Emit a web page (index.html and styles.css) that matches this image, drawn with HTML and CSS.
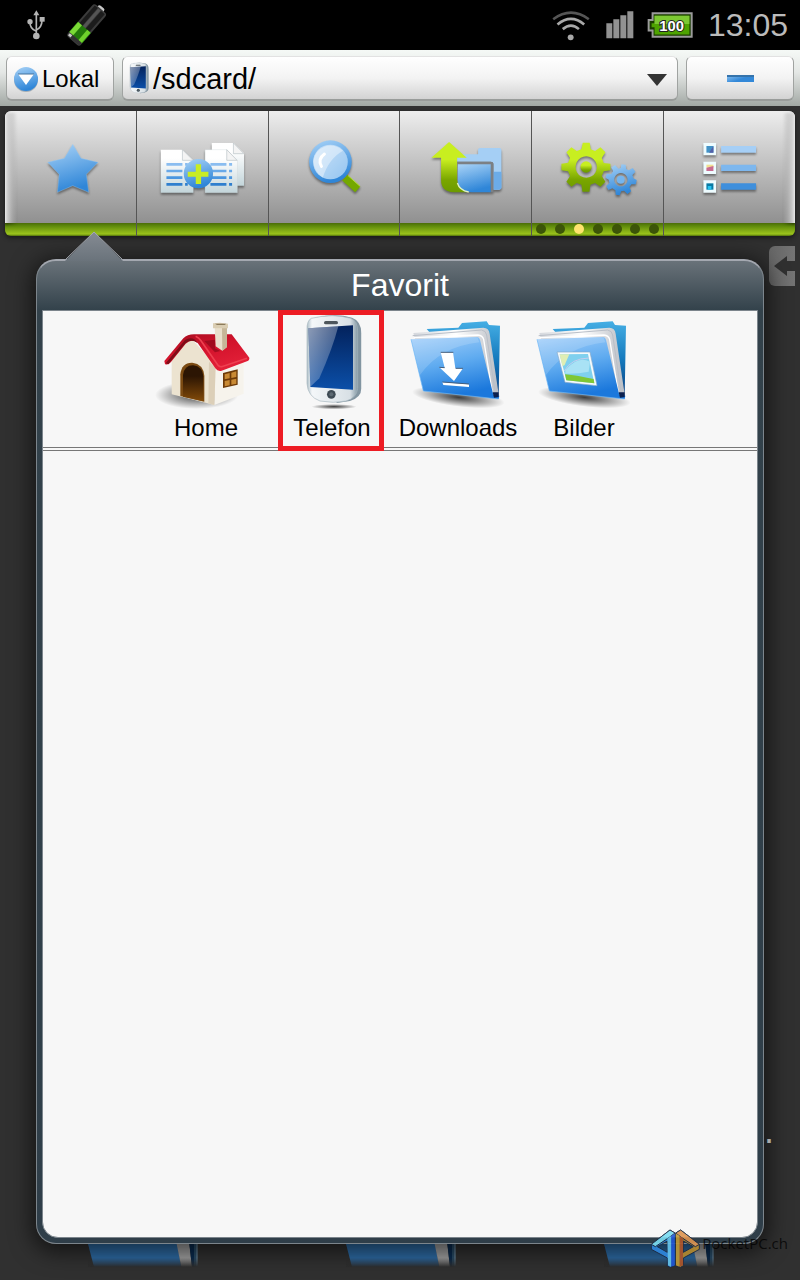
FILE: index.html
```html
<!DOCTYPE html>
<html lang="de">
<head>
    <meta charset="UTF-8">
    <meta name="viewport" content="width=device-width, initial-scale=1.0">
    <title>Favorit</title>
    <link rel="stylesheet" href="styles.css">
</head>
<body>
    <!-- shared gradients and folder shape -->
    <svg class="defs" width="0" height="0" aria-hidden="true">
        <defs>
            <linearGradient id="blue" x1="0" y1="0" x2="0.3" y2="1">
                <stop offset="0" stop-color="#a9d3f7"/>
                <stop offset="1" stop-color="#2f86d8"/>
            </linearGradient>
            <linearGradient id="green" x1="0" y1="0" x2="0" y2="1">
                <stop offset="0.35" stop-color="#c8ee20"/>
                <stop offset="0.75" stop-color="#7aa600"/>
                <stop offset="1" stop-color="#6c9a00"/>
            </linearGradient>
            <linearGradient id="paper" x1="0" y1="0" x2="0" y2="1">
                <stop offset="0.2" stop-color="#ffffff"/>
                <stop offset="1" stop-color="#c3d5da"/>
            </linearGradient>
            <linearGradient id="cover" x1="0" y1="0" x2="0.3" y2="1">
                <stop offset="0" stop-color="#a3cffa"/>
                <stop offset="0.5" stop-color="#5fabf0"/>
                <stop offset="1" stop-color="#1b78dc"/>
            </linearGradient>
            <linearGradient id="back" x1="0" y1="0" x2="0" y2="1">
                <stop offset="0" stop-color="#45aee4"/>
                <stop offset="0.5" stop-color="#1479bd"/>
                <stop offset="1" stop-color="#0b3c7c"/>
            </linearGradient>
            <linearGradient id="pages" x1="0" y1="0" x2="1" y2="0">
                <stop offset="0" stop-color="#d5d8dd"/>
                <stop offset="0.5" stop-color="#ffffff"/>
                <stop offset="1" stop-color="#b9bdc4"/>
            </linearGradient>
            <linearGradient id="screen" x1="0" y1="0" x2="0" y2="1">
                <stop offset="0" stop-color="#03225c"/>
                <stop offset="1" stop-color="#0b4fa8"/>
            </linearGradient>
            <linearGradient id="glare" x1="0" y1="0" x2="1" y2="1">
                <stop offset="0" stop-color="#ffffff" stop-opacity="0.55"/>
                <stop offset="1" stop-color="#ffffff" stop-opacity="0.05"/>
            </linearGradient>
            <linearGradient id="shell" x1="0" y1="0" x2="1" y2="0">
                <stop offset="0" stop-color="#aebfc8"/>
                <stop offset="0.1" stop-color="#f4f7f9"/>
                <stop offset="0.85" stop-color="#d8e0e5"/>
                <stop offset="1" stop-color="#8499a5"/>
            </linearGradient>
            <radialGradient id="shade">
                <stop offset="0" stop-color="#000000" stop-opacity="0.75"/>
                <stop offset="1" stop-color="#000000" stop-opacity="0"/>
            </radialGradient>
            <symbol id="folder" viewBox="15 18 378 300">
                <ellipse cx="205" cy="277" rx="140" ry="28" transform="rotate(7 205 277)" fill="url(#shade)"/>
                <path d="M110 72L205 68L216 54L290 49L297 60L330 62L326 272L310 278L220 200Z" fill="url(#back)"/>
                <path d="M70 84L280 68Q297 68 299 86L326 268L312 278L250 110L75 102Z" fill="url(#pages)"/>
                <path d="M68 92L275 75Q288 77 290 90L316 266" fill="none" stroke="#b9bfc8" stroke-width="3"/>
                <path d="M72 98L264 90Q278 92 281 103L308 270" fill="none" stroke="#ffffff" stroke-width="4"/>
                <path d="M63 103L262 96Q268 97 270 104L310 270L328 272L326 282L100 258Z" fill="url(#cover)"/>
                <path d="M63 103L262 96L268 112Q150 125 90 210Z" fill="#ffffff" opacity="0.16"/>
                <path d="M308 262L326 262L326 276L312 278Z" fill="#0b2150"/>
                <path d="M63 103L100 258L326 282" fill="none" stroke="#6db7f6" stroke-width="2"/>
            </symbol>
            <symbol id="phone" viewBox="465 25 170 285">
                <path d="M500 38Q555 24 606 38Q634 48 634 85V250Q634 278 600 288L560 294Z" fill="#8295a1"/>
                <path d="M484 40Q550 24 602 40Q623 47 623 78V250Q620 280 588 288Q550 296 510 288Q473 275 471 235V75Q470 47 484 40Z" fill="url(#shell)" stroke="#a8b6be" stroke-width="2"/>
                <path d="M475 70L609 61V254L481 246Z" fill="url(#screen)"/>
                <path d="M475 70L565 64Q548 130 508 220L481 245Z" fill="url(#glare)"/>
                <rect x="522" y="48" width="42" height="10" rx="5" fill="#4d565c"/>
                <circle cx="544" cy="268" r="13" fill="#3f4c55"/>
                <circle cx="544" cy="268" r="6" fill="#5d6a73"/>
            </symbol>
        </defs>
    </svg>

    <div class="page">
        <header class="status-bar">
            <div class="status-group">
                <svg class="usb" viewBox="0 0 54 90" aria-hidden="true">
                    <path d="M28 78V12M28 64Q8 56 9 36M28 60Q45 52 45 30" fill="none" stroke="#b4b4b4" stroke-width="5"/>
                    <path d="M19 16L28 1L37 16Z" fill="#b4b4b4"/>
                    <circle cx="9" cy="35" r="8" fill="#b4b4b4"/>
                    <rect x="38" y="21" width="15" height="14" fill="#b4b4b4"/>
                    <circle cx="28" cy="78" r="10" fill="#b4b4b4"/>
                </svg>
                <svg class="cell" viewBox="192 8 132 132" aria-hidden="true">
                    <g transform="rotate(41 258 76)">
                        <rect x="246" y="2" width="24" height="16" rx="6" fill="#c8c8c8"/>
                        <rect x="232" y="9" width="52" height="128" rx="9" fill="#3c3c3c"/>
                        <rect x="238" y="13" width="12" height="72" fill="#1c1c1c"/>
                        <rect x="252" y="13" width="9" height="72" fill="#555555"/>
                        <rect x="263" y="13" width="15" height="72" fill="#1c1c1c"/>
                        <rect x="232" y="83" width="52" height="40" fill="#237a0a"/>
                        <rect x="233" y="83" width="15" height="40" fill="#7bdb36"/>
                        <rect x="269" y="83" width="13" height="40" fill="#6fd12c"/>
                        <rect x="234" y="124" width="48" height="10" rx="4" fill="#333333"/>
                        <rect x="236" y="125" width="10" height="8" fill="#cccccc"/>
                    </g>
                </svg>
            </div>
            <div class="status-group">
                <svg class="wifi" viewBox="34 26 114 94" aria-hidden="true">
                    <g fill="none" stroke-width="8">
                        <path d="M37 54Q91 14 145 54" stroke="#555555"/>
                        <path d="M50 70Q91 36 131 70" stroke="#a8a8a8"/>
                        <path d="M66 84Q91 63 115 84" stroke="#a8a8a8"/>
                    </g>
                    <circle cx="90" cy="109" r="9" fill="#a8a8a8"/>
                </svg>
                <svg class="signal" viewBox="200 38 84 84" aria-hidden="true">
                    <path d="M201 75h18v45h-18zM222 63h18v57h-18zM243 51h18v69h-18zM264 39h18v81h-18z" fill="#929292"/>
                </svg>
                <svg class="battery" viewBox="320 38 140 78" aria-hidden="true">
                    <path d="M337 41H456V113H337V94H325V62H337Z" fill="#1b3d00" stroke="#9b9b9b" stroke-width="6"/>
                    <path d="M343 49H449V106H343V84H334V72H343Z" fill="#4ea300"/>
                    <path d="M343 49H449V74H343Z" fill="#7cc832"/>
                    <text class="charge" x="395" y="94" text-anchor="middle">100</text>
                </svg>
                <time class="clock">13:05</time>
            </div>
        </header>

        <form class="address-bar">
            <button type="button" class="box source">
                <svg viewBox="0 0 26 26" aria-hidden="true">
                    <circle cx="13" cy="14" r="12" fill="#6b7c8a" opacity="0.5"/>
                    <circle cx="13" cy="13" r="12" fill="url(#blue)"/>
                    <path d="M5 8H21L13 19Z" fill="#ffffff"/>
                    <path d="M5 8H21" stroke="#45729c"/>
                </svg>
                Lokal
            </button>
            <div class="path">
                <svg class="path-icon" viewBox="465 25 170 285" aria-hidden="true"><use href="#phone" x="465" y="25" width="170" height="285"/></svg>
                <select class="box" aria-label="Pfad">
                    <option>/sdcard/</option>
                </select>
                <svg class="path-arrow" viewBox="0 0 20 12" aria-hidden="true"><path d="M0 0H20L10 12Z" fill="#333333"/></svg>
            </div>
            <button type="button" class="box minimize" aria-label="Minimieren"><span></span></button>
        </form>

        <nav class="toolbar">
            <button type="button" aria-label="Favorit">
                <svg viewBox="15 18 390 336">
                    <path d="M217 118L242 160L293 172L258 208L265 262L217 242L171 262L176 208L142 172L192 160Z" fill="url(#blue)" stroke="#9fcdf5" stroke-width="1"/>
                </svg>
            </button>
            <button type="button" aria-label="Kopieren">
                <svg viewBox="411 18 390 336">
                    <path d="M634 114H700L731 145V242H634Z" fill="url(#paper)"/>
                    <path d="M699 114L730 146H699Z" fill="#f4f4f4" stroke="#b8c1c5" stroke-width="2"/>
                    <path d="M481 134H546L579 166V263H481Z" fill="url(#paper)"/>
                    <path d="M546 134L578 166H546Z" fill="#f4f4f4" stroke="#b8c1c5" stroke-width="2"/>
                    <path d="M614 134H679L711 166V263H614Z" fill="url(#paper)" stroke="#c8d0d3" stroke-width="1"/>
                    <path d="M679 134L710 166H679Z" fill="#f4f4f4" stroke="#b8c1c5" stroke-width="2"/>
                    <g stroke-width="8">
                        <path d="M498 178H546M554 178H562M630 178H678M686 178H695" stroke="#8abdf0"/>
                        <path d="M498 198H546M554 198H562M630 198H678M686 198H695" stroke="#68a9e8"/>
                        <path d="M498 218H546M554 218H562M630 218H678M686 218H695" stroke="#4a96e0"/>
                        <path d="M498 238H546M554 238H562M630 238H678M686 238H695" stroke="#2f7fce"/>
                    </g>
                    <circle cx="594" cy="206" r="44" fill="url(#blue)"/>
                    <path d="M586 178H602V200H624V215H602V237H586V215H562V200H586Z" fill="#c8ec24"/>
                </svg>
            </button>
            <button type="button" aria-label="Suchen">
                <svg viewBox="12 18 390 336">
                    <path d="M238 218L277 253" stroke="#74a800" stroke-width="23"/>
                    <path d="M248 212L284 244" stroke="#b7df3c" stroke-width="3"/>
                    <circle cx="195" cy="170" r="64" fill="url(#blue)"/>
                    <circle cx="195" cy="171" r="52" fill="#8fc2f0"/>
                    <circle cx="195" cy="171" r="52" fill="url(#glare)"/>
                    <path d="M144 168A52 52 0 0 1 233 137Q190 160 172 218Q145 200 144 168Z" fill="#ffffff" opacity="0.4"/>
                    <path d="M177 147Q156 162 168 184" fill="none" stroke="#ffffff" stroke-width="9" stroke-linecap="round"/>
                </svg>
            </button>
            <button type="button" aria-label="Nach oben">
                <svg viewBox="405 18 390 336">
                    <path d="M575 148H638V134Q638 129 644 129H702Q708 129 708 136V247Q708 254 700 254H684V176Q684 170 676 170H575Z" fill="#a5cff5"/>
                    <path d="M684 200H708V247Q708 254 700 254H684Z" fill="#6cace8"/>
                    <path d="M575 170H676Q684 170 684 178V262H676V178H575Z" fill="#7c8084"/>
                    <path d="M577 178H676V262H620Q577 260 577 232Z" fill="url(#blue)"/>
                    <path d="M551 111L604 158H575V224Q576 252 606 262H565Q527 260 527 226V158H498Z" fill="url(#green)"/>
                    <path d="M576 234Q582 256 610 261" fill="none" stroke="#e2f2c5" stroke-width="4"/>
                </svg>
            </button>
            <button type="button" aria-label="Einstellungen">
                <svg viewBox="6 18 390 336">
                    <g fill="url(#green)">
                        <path fill-rule="evenodd" d="M157 113H178L181 133L194 138L210 127L225 142L214 159L220 174L240 176V196L220 199L214 213L225 230L210 245L194 234L180 239L177 260H156L153 239L139 234L123 245L108 230L119 213L113 199L93 196V176L113 173L119 159L108 142L123 127L139 138L153 133ZM167 154A32 32 0 1 0 168 154Z"/>
                        <circle cx="167" cy="186" r="17"/>
                    </g>
                    <path fill-rule="evenodd" fill="url(#blue)" d="M273 178L286 179L287 192L295 196L307 189L315 200L306 210L309 220L319 225L316 238L303 238L297 246L302 259L291 267L281 257L272 259L268 271L256 269L255 256L246 250L234 255L227 243L237 234L235 224L225 218L229 206L242 207L248 199L243 187L254 180L264 191L271 189ZM271 204A20 20 0 1 0 272 204Z"/>
                    <circle cx="271" cy="224" r="12" fill="#75b5ee"/>
                </svg>
                <span class="dots"><i></i><i></i><i class="on"></i><i></i><i></i><i></i><i></i></span>
            </button>
            <button type="button" aria-label="Ansicht">
                <svg viewBox="402 18 390 336">
                    <path d="M519 114H557V151H519ZM519 170H557V207H519ZM519 226H557V263H519Z" fill="#eefcff"/>
                    <path d="M528 123H549V143H528Z" fill="#4292c6"/>
                    <path d="M536 143L549 123V143Z" fill="#5260a8"/>
                    <path d="M528 179H549V188H528Z" fill="#f2df91"/>
                    <path d="M528 188L549 183V198H528Z" fill="#c86c91"/>
                    <path d="M528 235H549V254H528Z" fill="#087aa5"/>
                    <path d="M532 243H543V254H532Z" fill="#25c4f1"/>
                    <path d="M572 123H677V143H572Z" fill="#a6cff6"/>
                    <path d="M572 179H677V198H572Z" fill="#7db7ee"/>
                    <path d="M572 235H677V254H572Z" fill="#3f8fdc"/>
                </svg>
            </button>
        </nav>

        <main class="desktop">
            <button type="button" class="drawer" aria-label="Zurück">
                <svg viewBox="0 0 26 40"><path d="M5 20L18 10V15H26V25H18V30Z" fill="#303030"/></svg>
            </button>

            <section class="popup">
                <svg class="pointer" viewBox="0 0 58 30" aria-hidden="true">
                    <defs>
                        <linearGradient id="tip" x1="0" y1="0" x2="0" y2="1">
                            <stop offset="0" stop-color="#858b93"/>
                            <stop offset="1" stop-color="#6a737b"/>
                        </linearGradient>
                    </defs>
                    <path d="M0 30L29 1L58 30Z" fill="url(#tip)"/>
                    <path d="M0 29L29 1L58 29" fill="none" stroke="#a4a8b0" stroke-width="1"/>
                </svg>
                <h1>Favorit</h1>
                <div class="popup-body">
                    <div class="favorites">
                        <a href="#home">
                            <svg viewBox="-21 18 378 300" aria-hidden="true">
                                <defs>
                                    <linearGradient id="roof" x1="0" y1="0" x2="0.6" y2="1">
                                        <stop offset="0" stop-color="#a50d1f"/>
                                        <stop offset="0.5" stop-color="#d3132c"/>
                                        <stop offset="1" stop-color="#e32038"/>
                                    </linearGradient>
                                    <linearGradient id="doorway" x1="0" y1="0" x2="0" y2="1">
                                        <stop offset="0.3" stop-color="#2c1503"/>
                                        <stop offset="1" stop-color="#824a09"/>
                                    </linearGradient>
                                </defs>
                                <ellipse cx="140" cy="270" rx="125" ry="42" fill="url(#shade)"/>
                                <g transform="translate(15 30)">
                                    <path d="M50 125L108 70L182 150L178 270L50 238Z" fill="#ece3d0"/>
                                    <path d="M180 150L266 130V236L178 270Z" fill="#f6f3ec"/>
                                    <path d="M162 140L182 160L178 270L160 265Z" fill="#dccfb8"/>
                                    <path d="M76 243V178Q80 142 112 143Q145 147 148 182V260Z" fill="#7b4a12"/>
                                    <path d="M84 245V180Q88 150 115 151Q142 154 145 184V259Z" fill="url(#doorway)"/>
                                    <path d="M204 174L248 163V209L204 219Z" fill="#6d3a08"/>
                                    <path d="M209 178L224 174V190L209 193ZM229 173L244 169V186L229 189ZM209 198L224 195V211L209 214ZM229 194L244 191V206L229 209Z" fill="#c98a34"/>
                                    <path d="M28 138L85 70Q98 57 120 58H230L283 128Q284 136 276 139L200 167Q188 170 181 160L128 84Q110 70 92 86L48 141Q38 152 30 147Z" fill="url(#roof)"/>
                                    <path d="M32 145L40 148L92 84Q110 70 128 84L120 74Q106 65 90 75Z" fill="#7d0d18"/>
                                    <path d="M122 64Q132 68 138 77L190 152Q194 156 200 155L276 130" fill="none" stroke="#ee4050" stroke-width="5"/>
                                    <path d="M148 78L180 74V100L196 108L180 112Z" fill="#8d0a19" opacity="0.7"/>
                                    <path d="M179 36H216V96L202 107L182 94Z" fill="#e9dfcc"/>
                                    <path d="M201 38H216V96L202 107Z" fill="#c6b698"/>
                                    <path d="M174 25L195 23L219 26V40H174Z" fill="#dacdb2"/>
                                    <path d="M180 26H214L209 30H186Z" fill="#8b7a5b"/>
                                </g>
                            </svg>
                            Home
                        </a>
                        <a href="#telefon" class="marked">
                            <svg viewBox="357 18 378 300" aria-hidden="true">
                                <ellipse cx="552" cy="305" rx="68" ry="8" fill="url(#shade)"/>
                                <use href="#phone" x="465" y="25" width="170" height="285"/>
                            </svg>
                            Telefon
                        </a>
                        <a href="#downloads">
                            <svg viewBox="15 18 378 300" aria-hidden="true">
                                <use href="#folder" x="15" y="18" width="378" height="300"/>
                                <path d="M152 142L189 142L196 190H219L192 228L148 187L164 188Z" fill="#ffffff"/>
                                <path d="M157 232L237 238V246L160 240Z" fill="#ffffff"/>
                                <path d="M152 142H190M148 187L164 188M197 190H219M157 231L237 237" fill="none" stroke="#455e7c" stroke-width="3"/>
                            </svg>
                            Downloads
                        </a>
                        <a href="#bilder">
                            <svg viewBox="15 18 378 300" aria-hidden="true">
                                <use href="#folder" x="15" y="18" width="378" height="300"/>
                                <path d="M123 141L222 141L243 242L147 232Z" fill="#f5fafc" stroke="#86a9c9" stroke-width="2"/>
                                <path d="M131 148L216 147L235 235L151 226Z" fill="#7fd0ee"/>
                                <path d="M131 148L160 148L146 180L139 184Z" fill="#dfeeb4"/>
                                <path d="M148 196Q185 150 222 170L218 200Q180 208 148 206Z" fill="#a9e2f5"/>
                                <path d="M145 198Q165 160 219 159" fill="none" stroke="#c3cdee" stroke-width="3"/>
                                <path d="M147 208Q185 212 233 222L235 235L151 226Z" fill="#7fc735"/>
                            </svg>
                            Bilder
                        </a>
                    </div>
                </div>
            </section>

            <div class="files" aria-hidden="true">
                <svg viewBox="0 0 330 69"><use href="#file"/>
                    <defs>
                        <linearGradient id="fade" x1="0" y1="0" x2="0" y2="1">
                            <stop offset="0.6" stop-color="#2d2d2d" stop-opacity="0"/>
                            <stop offset="1" stop-color="#2d2d2d"/>
                        </linearGradient>
                        <g id="file">
                            <path d="M0 0H268L280 69H18Z" fill="#2d6aa3"/>
                            <path d="M266 0H304L312 69H280Z" fill="#a0a0a0"/>
                            <path d="M304 0H318V69H312Z" fill="#0a2b4f"/>
                            <path d="M318 0H328V69H318Z" fill="#284b66"/>
                            <path d="M327 0V69" stroke="#70899a" stroke-width="3"/>
                            <path d="M0 0H330V69H0Z" fill="url(#fade)"/>
                        </g>
                    </defs>
                </svg>
                <svg viewBox="0 0 330 69"><use href="#file"/></svg>
                <svg viewBox="0 0 330 69"><use href="#file"/></svg>
            </div>
            <span class="file-dot">.</span>
        </main>

        <div class="watermark">
            <svg viewBox="20 12 150 117" aria-hidden="true">
                <g stroke="#1b2a44" stroke-width="3" stroke-linejoin="round">
                    <path fill-rule="evenodd" d="M80 15L95 24V122L80 127L72 122V99L24 73V58ZM72 48L42 65L72 82Z" fill="#2f86dc"/>
                    <path d="M24 58L80 15L95 24L78 37L36 65Z" fill="#7adcf2"/>
                    <path fill-rule="evenodd" d="M112 15L97 24V122L112 127L120 122V99L168 73V58ZM120 48L150 65L120 82Z" fill="#b5892c"/>
                    <path d="M168 58L112 15L97 24L114 37L156 65Z" fill="#dd9450"/>
                </g>
                <path d="M72 40L83 34V125L74 121Z" fill="#66c6f0"/>
                <path d="M84 32L94 26V121L84 125Z" fill="#2156d8"/>
                <path d="M98 26L108 32V125L98 121Z" fill="#c19a35"/>
                <path d="M109 34L119 40V121L109 125Z" fill="#b0562a"/>
            </svg>
            <span>PocketPC.ch</span>
        </div>
    </div>
</body>
</html>
```
FILE: styles.css
```css
* {
    box-sizing: border-box;
}
body {
    margin: 0;
    background-color: #303030;
    font-family: "Liberation Sans", Arial, sans-serif;
    color: #000;
}
button, select {
    margin: 0;
    padding: 0;
    border: 0;
    background: none;
    font-family: inherit;
    color: inherit;
    cursor: pointer;
}
svg {
    display: block;
    flex: none;
}
.defs {
    position: absolute;
}
.page {
    position: relative;
    display: flex;
    flex-direction: column;
    min-height: 100vh;
    overflow: hidden;
}

/* status bar */
.status-bar {
    display: flex;
    justify-content: space-between;
    height: 50px;
    padding: 0 12px 0 27px;
    background-color: #000;
}
.status-group {
    display: flex;
    align-items: center;
}
.usb {
    width: 18px;
    height: 30px;
    margin-right: 19px;
}
.cell {
    width: 44px;
    height: 44px;
}
.wifi {
    width: 38px;
    height: 31px;
    margin-right: 16px;
}
.signal {
    width: 28px;
    height: 28px;
    margin-right: 13px;
}
.battery {
    width: 46px;
    height: 26px;
    margin-right: 15px;
}
.charge {
    font-size: 45px;
    font-weight: bold;
    fill: #fff;
    stroke: #222;
    stroke-width: 6px;
    paint-order: stroke;
}
.clock {
    font-size: 32px;
    color: #bbb;
}

/* address bar */
.address-bar {
    display: flex;
    gap: 8px;
    height: 56px;
    padding: 6px 6px 5px;
    background: linear-gradient(#f5f9f6, #e4e7e5 40%, #a2a8a4);
}
.box {
    height: 45px;
    border: 1px solid #a0a3a1;
    border-top-color: #e2e2e2;
    border-bottom: 2px solid #999c9a;
    border-radius: 6px;
    background: linear-gradient(#fff, #f3f3f3 50%, #d3d3d3);
}
.source {
    display: flex;
    align-items: center;
    gap: 3px;
    width: 108px;
    padding: 2px 0 0 6px;
    font-size: 24px;
}
.source svg {
    width: 26px;
    height: 26px;
}
.path {
    position: relative;
    flex: 1;
}
.path select {
    width: 100%;
    padding: 2px 0 0 30px;
    font-size: 29px;
    appearance: none;
}
.path-icon {
    position: absolute;
    left: 7px;
    top: 6px;
    width: 20px;
    height: 33px;
    pointer-events: none;
}
.path-arrow {
    position: absolute;
    right: 11px;
    top: 18px;
    width: 20px;
    height: 12px;
    pointer-events: none;
}
.minimize {
    display: flex;
    align-items: center;
    justify-content: center;
    width: 108px;
}
.minimize span {
    width: 27px;
    height: 7px;
    border-top: 2px solid #3573ab;
    background: linear-gradient(160deg, #79b6ec, #3388d8 50%);
}

/* toolbar */
.toolbar {
    display: flex;
    height: 125px;
    margin: 5px 5px 0;
    border-radius: 6px;
    overflow: hidden;
    background: linear-gradient(#eee, #d8d8d8 20%, #909090 112px, #4a6c08 112px, #5f8a0b 115px, #9cc41c 123px, #4f6e0c 125px);
    box-shadow: 0 2px 4px #1a1a1a;
}
.toolbar button {
    position: relative;
    flex: 1;
    border-right: 1px solid #555;
}
.toolbar button:last-child {
    border-right: 0;
}
.toolbar svg {
    width: 100%;
    height: 112px;
    margin-bottom: 13px;
    filter: drop-shadow(0 2px 1px rgba(0, 0, 0, 0.4));
}
.toolbar button:first-child svg {
    background: linear-gradient(90deg, #e6e6e6, transparent 12px);
}
.toolbar button:last-child svg {
    background: linear-gradient(270deg, #e6e6e6, transparent 12px);
}
.dots {
    position: absolute;
    left: 4px;
    right: 4px;
    bottom: 2px;
    display: flex;
    justify-content: space-between;
}
.dots i {
    width: 10px;
    height: 10px;
    border-radius: 50%;
    background-color: #3c5508;
}
.dots .on {
    background-color: #ffe36e;
}

/* popup */
.desktop {
    position: relative;
    flex: 1;
    display: flex;
    flex-direction: column;
    padding: 23px 36px 13px;
}
.drawer {
    position: absolute;
    top: 10px;
    right: 5px;
    width: 26px;
    height: 40px;
    border-radius: 6px 0 0 6px;
    background: linear-gradient(90deg, #666, #747474);
}
.popup {
    position: relative;
    z-index: 1;
    flex: 1;
    display: flex;
    flex-direction: column;
    padding: 0 5px 5px;
    border: 1px solid #7c858c;
    border-top: 2px solid #a4a8b0;
    border-radius: 20px;
    background: linear-gradient(#697279, #33424b 49px, #2f3e49);
    box-shadow: 0 4px 22px 4px rgba(0, 0, 0, 0.6);
}
.pointer {
    position: absolute;
    left: 28px;
    top: -30px;
    width: 58px;
    height: 30px;
}
.popup h1 {
    margin: 0;
    font-size: 32px;
    font-weight: normal;
    line-height: 49px;
    text-align: center;
    color: #fff;
}
.popup-body {
    flex: 1;
    border: 1px solid #7c858c;
    border-radius: 0 0 16px 16px;
    background-color: #f7f7f7;
}
.favorites {
    display: flex;
    justify-content: center;
    padding: 0 10px 2px 0;
    border-bottom: 4px double #777;
}
.favorites a {
    position: relative;
    width: 126px;
    font-size: 24px;
    line-height: 34px;
    text-align: center;
    text-decoration: none;
    color: #000;
}
.favorites svg {
    width: 126px;
    height: 100px;
}
.marked::after {
    content: "";
    position: absolute;
    inset: -1px 11px -6px 9px;
    border: 5px solid #ed1c24;
}

/* files behind the popup */
.files {
    display: flex;
    gap: 148px;
    padding-left: 52px;
}
.files svg {
    width: 110px;
    height: 23px;
}
.file-dot {
    position: absolute;
    right: 26px;
    bottom: 128px;
    z-index: 1;
    font-size: 36px;
    color: #aaa;
}
.watermark {
    position: absolute;
    right: 12px;
    bottom: 12px;
    z-index: 2;
    display: flex;
    align-items: center;
    gap: 2px;
    font-family: "Open Sans", "Noto Sans", sans-serif;
    font-size: 15px;
    color: rgba(0, 0, 0, 0.75);
}
.watermark svg {
    width: 50px;
    height: 39px;
    opacity: 0.9;
}
.watermark span {
    margin-bottom: 12px;
}
```
